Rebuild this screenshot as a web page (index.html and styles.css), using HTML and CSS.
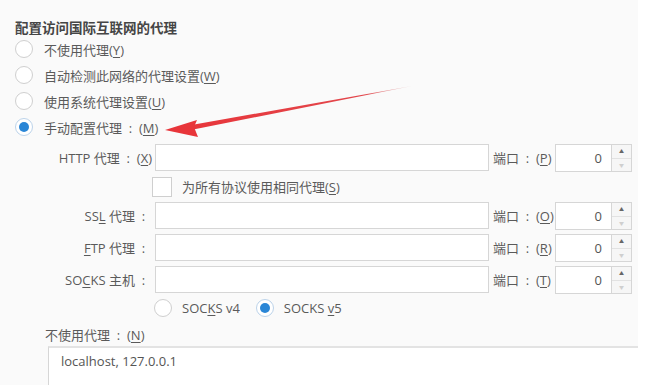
FILE: index.html
```html
<!DOCTYPE html>
<html lang="zh-CN">
<head>
<meta charset="utf-8">
<link rel="stylesheet" href="styles.css">
</head>
<body>
<div class="panel">
  <div class="title">配置访问国际互联网的代理</div>
  <div class="opts">
    <div class="opt"><span class="radio"></span><span>不使用代理(<u>Y</u>)</span></div>
    <div class="opt"><span class="radio"></span><span>自动检测此网络的代理设置(<u>W</u>)</span></div>
    <div class="opt"><span class="radio"></span><span>使用系统代理设置(<u>U</u>)</span></div>
    <div class="opt"><span class="radio on"></span><span>手动配置代理<span class="c">:</span>(<u>M</u>)</span></div>
  </div>
  <div class="rows">
    <div class="row">
      <span class="lbl">HTTP 代理<span class="c">:</span>(<u>X</u>)</span>
      <span class="field"></span>
      <span class="plbl">端口<span class="c">:</span>(<u>P</u>)</span>
      <span class="port"><span class="num">0</span><span class="spin"><span class="up">▲</span><span class="dn">▼</span></span></span>
    </div>
    <div class="row chkrow">
      <span class="box"></span><span>为所有协议使用相同代理(<u>S</u>)</span>
    </div>
    <div class="row">
      <span class="lbl">SS<u>L</u> 代理<span class="c">:</span></span>
      <span class="field"></span>
      <span class="plbl">端口<span class="c">:</span>(<u>O</u>)</span>
      <span class="port"><span class="num">0</span><span class="spin"><span class="up">▲</span><span class="dn">▼</span></span></span>
    </div>
    <div class="row gap">
      <span class="lbl"><u>F</u>TP 代理<span class="c">:</span></span>
      <span class="field"></span>
      <span class="plbl">端口<span class="c">:</span>(<u>R</u>)</span>
      <span class="port"><span class="num">0</span><span class="spin"><span class="up">▲</span><span class="dn">▼</span></span></span>
    </div>
    <div class="row gap">
      <span class="lbl">SO<u>C</u>KS 主机<span class="c">:</span></span>
      <span class="field"></span>
      <span class="plbl">端口<span class="c">:</span>(<u>T</u>)</span>
      <span class="port"><span class="num">0</span><span class="spin"><span class="up">▲</span><span class="dn">▼</span></span></span>
    </div>
    <div class="row socks">
      <span class="radio"></span><span class="slbl">SOC<u>K</u>S v4</span>
      <span class="radio on"></span><span class="slbl">SOCKS <u>v</u>5</span>
    </div>
  </div>
  <div class="nolbl">不使用代理<span class="c">:</span>(<u>N</u>)</div>
  <div class="area">localhost, 127.0.0.1</div>
</div>
<svg class="arrow" width="664" height="385" viewBox="0 0 664 385">
  <defs>
    <linearGradient id="g" x1="180" y1="127" x2="412" y2="86" gradientUnits="userSpaceOnUse">
      <stop offset="0" stop-color="#e8353a"/>
      <stop offset="0.8" stop-color="#e2474c"/>
      <stop offset="1" stop-color="#d9a3a5" stop-opacity="0.5"/>
    </linearGradient>
  </defs>
  <polygon points="412,86 190,125.3 192,129.7" fill="url(#g)"/>
  <polygon points="165,130 197,120 194,127 198,137" fill="#e8353a"/>
</svg>
</body>
</html>
```
FILE: styles.css
```css
html, body {
  margin: 0;
  padding: 0;
  background: #ffffff;
}
body {
  width: 664px;
  height: 385px;
  overflow: hidden;
  position: relative;
  font-family: "Open Sans", "Noto Sans CJK SC", sans-serif;
  font-size: 13px;
  color: #5a5a5a;
}
u {
  text-decoration: underline;
  text-underline-offset: 2px;
}
.c {
  display: inline-block;
  width: 17px;
  text-align: center;
}
.panel {
  width: 638px;
  height: 385px;
  background: #fafafa;
  padding-top: 19px;
  box-sizing: border-box;
}
.title {
  padding-left: 15px;
  height: 17px;
  line-height: 17px;
  font-size: 13.5px;
  font-weight: bold;
  color: #454545;
  font-family: "Noto Sans CJK SC", sans-serif;
}
.opts {
  padding-left: 15px;
}
.opt {
  display: flex;
  align-items: center;
  height: 26px;
  gap: 11px;
}
.radio {
  width: 18px;
  height: 18px;
  box-sizing: border-box;
  border: 1px solid #cfcfcf;
  border-radius: 50%;
  background: #ffffff;
  display: flex;
  align-items: center;
  justify-content: center;
  flex: none;
}
.radio.on {
  border-color: #bcd3ea;
}
.radio.on::after {
  content: "";
  width: 10px;
  height: 10px;
  border-radius: 50%;
  background: #2a86d6;
}
.rows {
  margin-top: 4px;
}
.row {
  display: flex;
  align-items: center;
  height: 27px;
}
.row.gap {
  margin-top: 5px;
}
.lbl {
  width: 155px;
  padding-right: 3px;
  box-sizing: border-box;
  text-align: right;
  white-space: nowrap;
}
.field {
  width: 334px;
  height: 27px;
  box-sizing: border-box;
  border: 1px solid #d6d6d6;
  background: #ffffff;
}
.plbl {
  width: 66px;
  padding-left: 4px;
  box-sizing: border-box;
  white-space: nowrap;
}
.port {
  display: flex;
  height: 28px;
}
.num {
  width: 57px;
  height: 28px;
  box-sizing: border-box;
  border: 1px solid #d6d6d6;
  background: #ffffff;
  text-align: right;
  padding-right: 9px;
  line-height: 26px;
  color: #555;
}
.spin {
  width: 20px;
  height: 28px;
  box-sizing: border-box;
  border: 1px solid #d6d6d6;
  border-left: none;
  background: #f6f6f6;
  display: flex;
  flex-direction: column;
}
.spin span {
  flex: 1;
  font-size: 5px;
  line-height: 13px;
  text-align: center;
}
.spin .up {
  color: #666;
  border-bottom: 1px solid #e2e2e2;
}
.spin .dn {
  color: #cfcfcf;
}
.chkrow {
  height: 31px;
  padding-left: 152px;
}
.box {
  width: 20px;
  height: 20px;
  box-sizing: border-box;
  border: 1px solid #cfcfcf;
  background: #ffffff;
  margin-right: 10px;
}
.socks {
  height: 29px;
  padding-left: 154px;
}
.slbl {
  margin-left: 10px;
  margin-right: 16px;
}
.nolbl {
  padding-left: 45px;
  height: 22px;
  line-height: 22px;
  margin-top: 2px;
}
.area {
  margin-left: 48px;
  width: 590px;
  height: 39px;
  box-sizing: border-box;
  background: #ffffff;
  border-top: 2px solid #e3e3e3;
  border-left: 1px solid #d6d6d6;
  padding: 4px 0 0 12px;
  color: #555;
}
.arrow {
  position: absolute;
  left: 0;
  top: 0;
  pointer-events: none;
}
```
